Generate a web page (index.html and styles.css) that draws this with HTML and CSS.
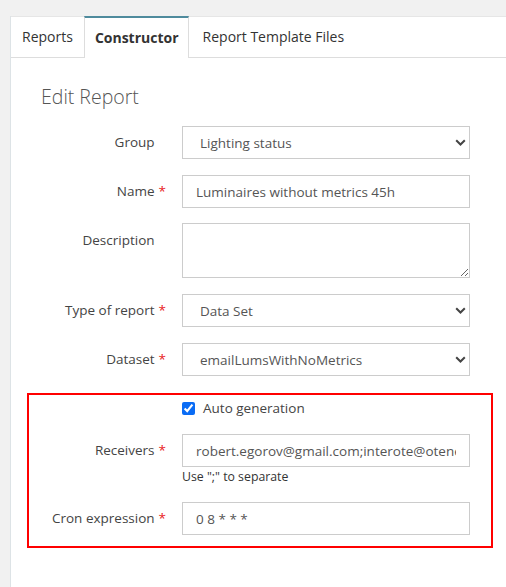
FILE: index.html
```html
<!DOCTYPE html>
<html>
<head>
    <meta charset="UTF-8">
    <title>Edit Report</title>
    <link rel="stylesheet" href="styles.css">
</head>
<body>
    <div class="page">
        <div class="panel">
            <!-- tabs -->
            <ul class="tabs">
                <li class="tab">Reports</li>
                <li class="tab active">Constructor</li>
                <li class="tab">Report Template Files</li>
            </ul>

            <div class="content">
                <h3 class="title">Edit Report</h3>

                <div class="form">
                    <label class="label">Group<span class="req blank">*</span></label>
                    <div class="select-wrap">
                        <select class="control select">
                            <option>Lighting status</option>
                        </select>
                        <svg class="chevron" width="11" height="7" viewBox="0 0 11 7"><path d="M1.2 1.2l4.3 4.3 4.3-4.3" fill="none" stroke="#444" stroke-width="2"/></svg>
                    </div>

                    <label class="label">Name<span class="req">*</span></label>
                    <input class="control" type="text" value="Luminaires without metrics 45h">

                    <label class="label">Description<span class="req blank">*</span></label>
                    <textarea class="control area"></textarea>

                    <label class="label">Type of report<span class="req">*</span></label>
                    <div class="select-wrap">
                        <select class="control select">
                            <option>Data Set</option>
                        </select>
                        <svg class="chevron" width="11" height="7" viewBox="0 0 11 7"><path d="M1.2 1.2l4.3 4.3 4.3-4.3" fill="none" stroke="#444" stroke-width="2"/></svg>
                    </div>

                    <label class="label">Dataset<span class="req">*</span></label>
                    <div class="select-wrap">
                        <select class="control select">
                            <option>emailLumsWithNoMetrics</option>
                        </select>
                        <svg class="chevron" width="11" height="7" viewBox="0 0 11 7"><path d="M1.2 1.2l4.3 4.3 4.3-4.3" fill="none" stroke="#444" stroke-width="2"/></svg>
                    </div>
                </div>

                <!-- auto generation block -->
                <div class="auto-box">
                    <div class="form">
                        <span></span>
                        <label class="check">
                            <input type="checkbox" checked>
                            <span>Auto generation</span>
                        </label>

                        <label class="label">Receivers<span class="req">*</span></label>
                        <div>
                            <input class="control" type="text" value="robert.egorov@gmail.com;interote@otenergy.ru">
                            <div class="help">Use ";" to separate</div>
                        </div>

                        <label class="label">Cron expression<span class="req">*</span></label>
                        <input class="control" type="text" value="0 8 * * *">
                    </div>
                </div>
            </div>
        </div>
    </div>
</body>
</html>
```

FILE: styles.css
```css
* { margin: 0; padding: 0; box-sizing: border-box; }

body {
    background: #f1f1f1;
    font-family: "Open Sans", "Liberation Sans", sans-serif;
    font-size: 13.5px;
    color: #444;
}

.page {
    padding: 16px 0 0 10px;
    height: 587px;
    overflow: hidden;
}

.panel {
    background: #fff;
    border-left: 1px solid #dde3e6;
    height: 100%;
}

/* tabs */
.tabs {
    display: flex;
    list-style: none;
    border-top: 1px solid #e6e6e6;
    border-bottom: 1px solid #dddddd;
    height: 42px;
    font-size: 14px;
}

.tab {
    padding: 10px 11px;
    line-height: 20px;
    color: #333;
}

.tab.active {
    margin-top: -1px;
    margin-bottom: -1px;
    margin-right: 3px;
    border-top: 2px solid #4f8b9d;
    border-left: 1px solid #dddddd;
    border-right: 1px solid #dddddd;
    background: #fff;
    font-weight: 700;
    padding: 10px 9px 11px 10px;
}

.content {
    padding: 27px 0 0 30px;
}

.title {
    font-size: 19.5px;
    font-weight: 300;
    line-height: 24px;
    color: #555;
    margin-bottom: 17px;
}

/* form grid */
.form {
    display: grid;
    grid-template-columns: 125px 288px;
    column-gap: 16px;
    row-gap: 16px;
    align-items: start;
}

.label {
    text-align: right;
    line-height: 33px;
    color: #444;
    white-space: nowrap;
}

.req {
    color: #e8191c;
    margin-left: 4px;
}

.req.blank { visibility: hidden; }

.control {
    display: block;
    width: 288px;
    height: 33px;
    border: 1px solid #cccccc;
    background: #fff;
    font-family: inherit;
    font-size: 13.5px;
    color: #555;
    padding: 0 13px;
    border-radius: 0;
    outline: none;
}

.area {
    height: 55px;
    margin-top: -1px;
    resize: vertical;
}

.select-wrap { position: relative; }

.select {
    appearance: none;
    -webkit-appearance: none;
    padding-left: 17px;
}

.chevron {
    position: absolute;
    right: 4px;
    top: 13px;
    pointer-events: none;
}

/* red block */
.auto-box {
    margin: 17px 0 0 -14px;
    width: 466px;
    border: 2px solid #ff0000;
    padding: 3px 0 11px 12px;
}

.check {
    display: flex;
    align-items: center;
    gap: 8px;
    line-height: 20px;
    color: #444;
}

.check input {
    width: 13px;
    height: 13px;
    margin: 1px 0 0;
    accent-color: #0a6cf5;
}

.help {
    font-size: 12.3px;
    line-height: 18px;
    color: #333;
    margin-top: 1px;
}
```
